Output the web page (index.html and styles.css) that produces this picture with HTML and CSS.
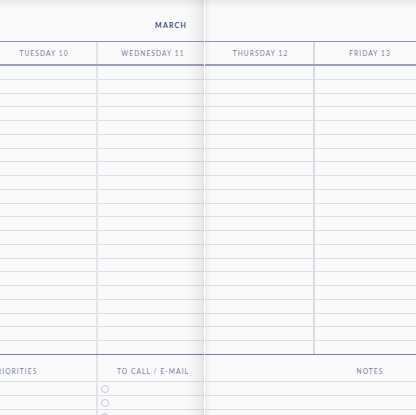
FILE: index.html
```html
<!DOCTYPE html>
<html>
<head>
<meta charset="utf-8">
<link rel="stylesheet" href="styles.css">
</head>
<body>
<div class="spread">
  <section class="page page-left">
    <div class="top"><span class="month">MARCH</span></div>
    <div class="days">
      <div class="day day-a">TUESDAY 10</div>
      <div class="day day-b">WEDNESDAY 11</div>
    </div>
    <div class="grid">
      <div class="col col-a"></div>
      <div class="col col-b"></div>
    </div>
    <div class="bottom">
      <div class="bcol bcol-a">
        <div class="blabel prio">PRIORITIES</div>
        <div class="blines"></div>
      </div>
      <div class="bcol bcol-b">
        <div class="blabel call">TO CALL / E-MAIL</div>
        <div class="blines checks">
          <span class="check"></span>
          <span class="check"></span>
          <span class="check"></span>
        </div>
      </div>
    </div>
  </section>
  <section class="page page-right">
    <div class="top"></div>
    <div class="days days-r">
      <div class="day day-c">THURSDAY 12</div>
      <div class="day day-d">FRIDAY 13</div>
    </div>
    <div class="grid grid-r">
      <div class="col col-c"></div>
      <div class="col col-d"></div>
    </div>
    <div class="bottom bottom-r">
      <div class="bcol bcol-c">
        <div class="blabel"></div>
        <div class="blines"></div>
      </div>
      <div class="bcol bcol-d">
        <div class="blabel notes">NOTES</div>
        <div class="blines"></div>
      </div>
    </div>
  </section>
  <div class="spine"></div>
  <div class="spine-r"></div>
  <div class="topshade"></div>
</div>
</body>
</html>
```

FILE: styles.css
```css
html, body {
  margin: 0;
  padding: 0;
}
body {
  width: 416px;
  height: 415px;
  overflow: hidden;
  background: #fafafa;
  font-family: Lato, "Open Sans", sans-serif;
}
.spread {
  position: relative;
  display: flex;
  height: 415px;
}
.page {
  flex: none;
  display: flex;
  flex-direction: column;
  background: #fafafa;
  height: 415px;
  overflow: hidden;
}
.page-left {
  margin-left: -8px;
  width: 212px;
}
.page-right {
  width: 221px;
}
.top {
  flex: none;
  height: 41px;
  border-bottom: 1px solid #8c95b7;
  display: flex;
  justify-content: flex-end;
  align-items: flex-start;
  box-sizing: content-box;
}
.month {
  margin-top: 21px;
  margin-right: 17px;
  font-size: 7px;
  font-weight: 700;
  letter-spacing: 1.2px;
  color: #3f4b8a;
  line-height: 9px;
}
.days {
  flex: none;
  display: grid;
  grid-template-columns: 106px 106px;
  height: 22px;
  border-bottom: 2px solid #97a0c2;
}
.days-r {
  grid-template-columns: 111px 110px;
}
.day {
  font-size: 6.6px;
  letter-spacing: 1.1px;
  color: #7880a6;
  text-align: center;
  line-height: 22px;
}
.day-a, .day-c {
  border-right: 2px solid #e2e4ed;
}
.day-b, .day-c {
  padding-left: 4px;
}
.day-c {
  border-right-color: #dadbe2;
}
.grid {
  flex: none;
  display: grid;
  grid-template-columns: 106px 106px;
  height: 288px;
  background: repeating-linear-gradient(to bottom, transparent 0, transparent 12.75px, #dcdee9 12.75px, #dcdee9 13.75px);
}
.grid-r {
  grid-template-columns: 111px 110px;
}
.col-a {
  border-right: 2px solid #e2e4ed;
}
.col-c {
  border-right: 2px solid #dadbe2;
}
.bottom {
  display: grid;
  grid-template-columns: 106px 106px;
  border-top: 1px solid #6f7ebb;
  flex: 1 1 auto;
  min-height: 0;
  overflow: hidden;
}
.bottom-r {
  grid-template-columns: 111px 110px;
}
.bcol {
  display: flex;
  flex-direction: column;
  min-height: 0;
}
.bcol-a {
  border-right: 2px solid #e2e4ed;
}
.blabel {
  flex: none;
  height: 27px;
  border-bottom: 1px solid #dcdee9;
  font-size: 6.6px;
  letter-spacing: 1.1px;
  color: #7880a6;
  line-height: 9px;
  padding-top: 12px;
  box-sizing: border-box;
  text-align: center;
}
.prio {
  text-align: right;
  padding-right: 60px;
}
.call {
  padding-left: 4px;
}
.blines {
  flex: 1 1 auto;
  min-height: 0;
  background: repeating-linear-gradient(to bottom, transparent 0, transparent 12.75px, #dcdee9 12.75px, #dcdee9 13.75px);
}
.checks {
  display: flex;
  flex-direction: column;
}
.check {
  display: block;
  width: 6px;
  height: 6px;
  border: 1px solid #c5c8d6;
  border-radius: 50%;
  margin: 3px 0 2.75px 3px;
  flex: none;
}
.spine {
  position: absolute;
  left: 184px;
  top: 0;
  width: 20px;
  height: 415px;
  background: linear-gradient(to right, rgba(0,0,0,0) 0%, rgba(40,40,60,0.035) 55%, rgba(40,40,60,0.1) 100%);
  pointer-events: none;
}
.spine-r {
  position: absolute;
  left: 204px;
  top: 0;
  width: 8px;
  height: 415px;
  background: linear-gradient(to right, rgba(255,255,255,0.9) 0, rgba(255,255,255,0.9) 1px, rgba(40,40,60,0.05) 1px, rgba(0,0,0,0) 100%);
  pointer-events: none;
}
.topshade {
  position: absolute;
  left: 0;
  top: 0;
  width: 416px;
  height: 8px;
  background: linear-gradient(to bottom, rgba(0,0,0,0.07), rgba(0,0,0,0));
  pointer-events: none;
}
```
